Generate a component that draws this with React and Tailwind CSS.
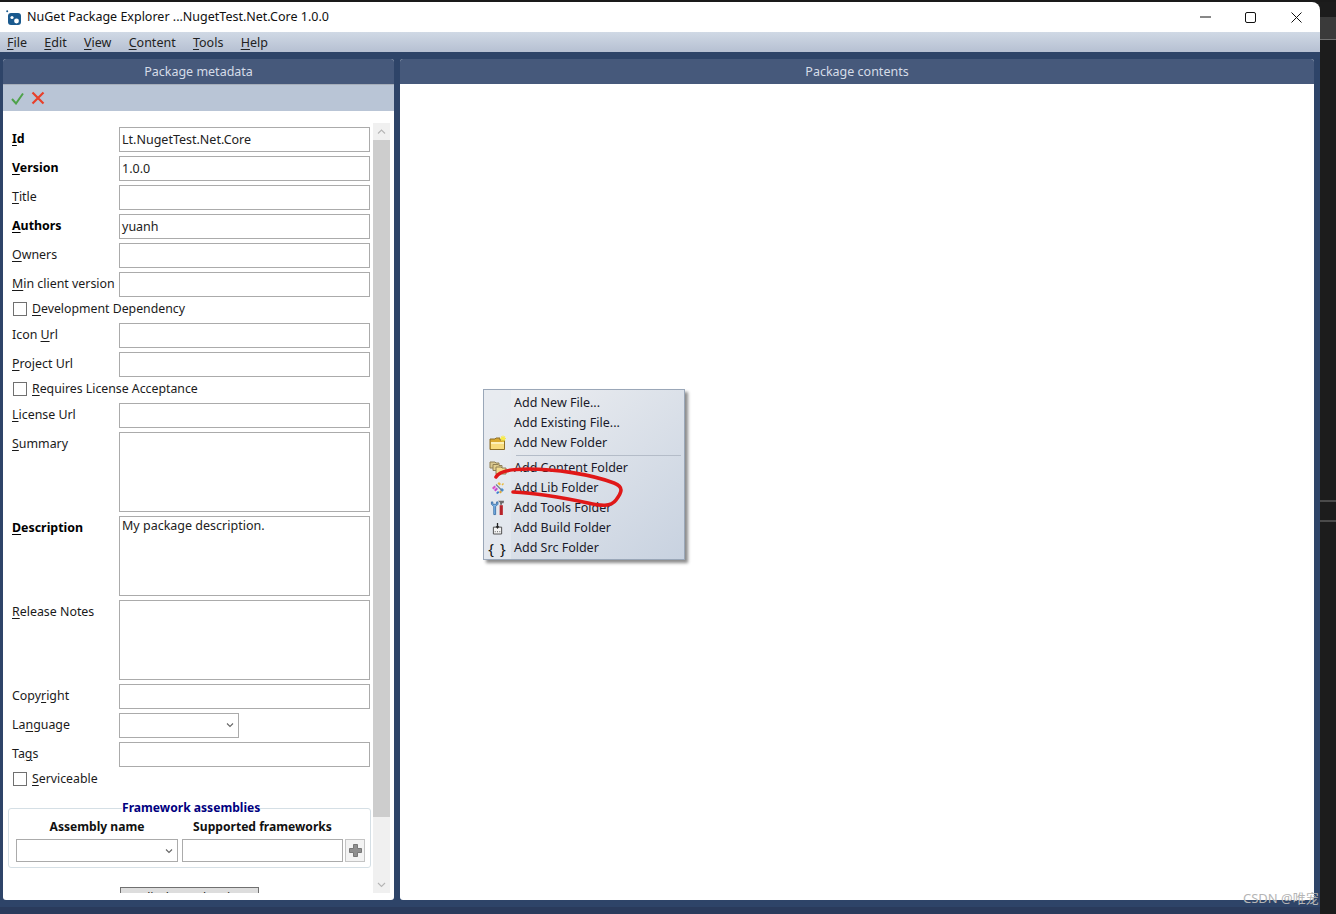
import React from "react";

const font = { fontFamily: '"Noto Sans", "Noto Sans CJK SC", sans-serif' };

function U({ text, i = 0 }) {
  return (
    <>
      {text.slice(0, i)}
      <span className="underline underline-offset-2 decoration-1">{text[i]}</span>
      {text.slice(i + 1)}
    </>
  );
}

function Row({ label, u = 0, bold, value = "", h = "h-[25px]", mb = "mb-[4px]", w = "w-[251px]", lead = "leading-[23px]", select }) {
  return (
    <div className={`flex ${mb}`}>
      <div className={`w-[107px] shrink-0 whitespace-nowrap text-[12.4px] leading-[24px] text-[#1a1a1a] ${bold ? "font-bold text-black" : ""}`}>
        <U text={label} i={u} />
      </div>
      <div className={`${h} ${w} ${lead} border border-[#ababab] bg-white px-[2px] text-[12.5px] text-[#222] relative`}>
        {value}
        {select && <Chevron />}
      </div>
    </div>
  );
}

function Chevron() {
  return (
    <svg className="absolute right-[4px] top-[8px]" width="8" height="6" viewBox="0 0 8 6">
      <path d="M1 1.5 L4 4.5 L7 1.5" fill="none" stroke="#666" strokeWidth="1.1" />
    </svg>
  );
}

function Check({ label, u = 0, mt = "mt-[2px]", mb = "mb-[6px]" }) {
  return (
    <div className={`flex items-center h-[18px] ${mt} ${mb}`}>
      <div className="w-[14px] h-[14px] border border-[#707070] bg-white ml-[1px] mr-[5px]" />
      <div className="text-[12.3px] leading-[18px] text-[#1a1a1a]">
        <U text={label} i={u} />
      </div>
    </div>
  );
}

function MenuItem({ label, icon }) {
  return (
    <div className="flex h-[20px] items-center">
      <div className="w-[27px] h-[20px] flex items-center justify-center shrink-0">{icon}</div>
      <div className="pl-[3px] text-[12.5px] leading-[20px] text-[#1a1a2a]">{label}</div>
    </div>
  );
}

const FolderNew = (
  <svg width="18" height="16" viewBox="0 0 18 16">
    <path d="M1 4 H6 L7 3 H11 V5 H15.5 V14.5 H1 Z" fill="#d9a92f" stroke="#8c6f2a" strokeWidth="1" />
    <path d="M2 7 H15 V14 H2 Z" fill="#f8dc7d" />
    <path d="M2 7 H15 V9 H2 Z" fill="#fdf0b8" />
    <path d="M14 0.5 V6.5 M11 3.5 H17 M12 1.5 L16 5.5 M16 1.5 L12 5.5" stroke="#f7ea4a" strokeWidth="1.1" />
  </svg>
);
const FolderStack = (
  <svg width="18" height="14" viewBox="0 0 18 14">
    <path d="M1 1 H6 L7 2 H10 V7 H1 Z" fill="#d9c890" stroke="#8f7f55" />
    <path d="M4 3.5 H9 L10 4.5 H13 V9.5 H4 Z" fill="#e2d090" stroke="#8f7f55" />
    <path d="M7 6 H12 L13 7 H17 V13 H7 Z" fill="#f1dc90" stroke="#8f7f55" />
  </svg>
);
const LibIcon = (
  <svg width="14" height="14" viewBox="0 0 14 14">
    <path d="M8 1 L10 3 L8.5 4.5 L6.5 2.5 Z" fill="#e8b93a" />
    <path d="M10.5 3.5 L12 2 L13 3 L11.5 4.5 Z" fill="#e8b93a" />
    <path d="M1 7 L3.5 4.5 L5 6 L2.5 8.5 Z" fill="#d94fc9" />
    <path d="M3 9 L5.5 6.5 L7 8 L4.5 10.5 Z" fill="#c24ad2" />
    <path d="M5 12 L7 10 L8.5 11.5 L6.5 13 Z" fill="#3f7fd0" />
    <path d="M9 9 L11 7 L13 9 L11 11 Z" fill="#3f8fd8" />
    <path d="M8 11 L9.5 9.5 L11 11 L9.5 12.5 Z" fill="#e0a83a" />
    <path d="M5 3.5 L11 9.5" stroke="#6f7f95" strokeWidth="1.2" />
  </svg>
);
const ToolsIcon = (
  <svg width="15" height="16" viewBox="0 0 16 17">
    <path d="M1.5 2 V4.5 L4 7 V15.5 H6 V7 L8.5 4.5 V2 L7 2 V4.5 H3 V2 Z" fill="#7db6ea" stroke="#2a5f9a" strokeWidth="0.8" />
    <path d="M8.5 0.8 H15 L14.5 3.5 H12.8 V5 H10.8 V3 Z" fill="#6b6b6b" />
    <path d="M10.3 5.5 H13.7 V16 H10.3 Z" fill="#b8232a" />
  </svg>
);
const BuildIcon = (
  <svg width="11" height="13" viewBox="0 0 12 14">
    <path d="M1.5 5.5 H10.5 V13 H1.5 Z" fill="#f4f4f4" stroke="#444" />
    <path d="M6 1 V6" stroke="#222" strokeWidth="1.4" />
    <path d="M4 4.5 L6 7.5 L8 4.5 Z" fill="#222" />
    <path d="M3 10.5 H4 M5.5 10.5 H6.5 M8 10.5 H9" stroke="#444" />
  </svg>
);

export default function App() {
  return (
    <div className="w-[1336px] h-[914px] bg-[#1c1c1c] overflow-hidden relative flex flex-col" style={font}>
      <div className="h-[2px] bg-[#1a1a1a] shrink-0" />
      <div className="flex flex-1 min-h-0">
        <div className="w-[1320px] shrink-0 flex flex-col rounded-tr-[8px] overflow-hidden">
          {/* Title bar */}
          <div className="h-[30px] bg-white flex items-center shrink-0">
            <svg className="ml-[6px] mr-[6px] mt-[1px]" width="15" height="15" viewBox="0 0 15 15">
              <rect x="2" y="3" width="13" height="12" rx="3" fill="#1a5a8e" />
              <circle cx="1.2" cy="1.2" r="1" fill="#1a5a8e" />
              <circle cx="6" cy="7.5" r="1.6" fill="#fff" />
              <circle cx="10.5" cy="11" r="2.4" fill="#fff" />
            </svg>
            <div className="text-[12.5px] leading-[18px] text-[#111]">NuGet Package Explorer ...NugetTest.Net.Core 1.0.0</div>
            <div className="ml-auto flex items-center">
              <svg width="11" height="2" viewBox="0 0 11 2" className="mr-[34px]"><path d="M0 1 H11" stroke="#111" /></svg>
              <svg width="11" height="11" viewBox="0 0 11 11" className="mr-[35px]"><rect x="0.5" y="0.5" width="10" height="10" rx="1.5" fill="none" stroke="#111" /></svg>
              <svg width="11" height="11" viewBox="0 0 11 11" className="mr-[18px]"><path d="M0.5 0.5 L10.5 10.5 M10.5 0.5 L0.5 10.5" stroke="#111" /></svg>
            </div>
          </div>
          {/* Menu */}
          <div className="h-[20px] shrink-0 flex items-center bg-gradient-to-b from-[#d0d9e5] to-[#b6c0d2] pl-[7px] gap-[17.3px] pt-[2px] text-[12.5px] text-[#222]">
            <span><U text="File" /></span>
            <span><U text="Edit" /></span>
            <span><U text="View" /></span>
            <span><U text="Content" /></span>
            <span><U text="Tools" /></span>
            <span><U text="Help" /></span>
          </div>
          {/* Body */}
          <div className="flex-1 min-h-0 bg-[#2e4468] pt-[7px] pl-[3px] pr-[6px] pb-[7px] flex gap-[6px]">
            {/* Left panel */}
            <div className="w-[391px] shrink-0 flex flex-col bg-white rounded-[3px] overflow-hidden">
              <div className="h-[25px] pt-[1px] shrink-0 bg-[#46597b] flex items-center justify-center text-[12.5px] text-[#d5dce8]">Package metadata</div>
              <div className="h-[27px] shrink-0 bg-[#b9c5d6] border-t border-[#a6aeba] flex items-center pl-[8px] gap-[7px]">
                <svg width="13" height="13" viewBox="0 0 13 13"><path d="M1 7 L5 11.5 L12 1.5" fill="none" stroke="#4ea24a" strokeWidth="2" /></svg>
                <svg width="14" height="14" viewBox="0 0 14 14"><path d="M1.5 1.5 L12.5 12.5 M12.5 1.5 L1.5 12.5" stroke="#e8402a" strokeWidth="2.2" /></svg>
              </div>
              <div className="flex-1 min-h-0 flex pt-[12px] pb-[7px]">
                {/* Form */}
                <div className="w-[370px] h-[770px] shrink-0 overflow-hidden pl-[9px] pt-[4px]">
                  <Row label="Id" bold value="Lt.NugetTest.Net.Core" />
                  <Row label="Version" bold value="1.0.0" />
                  <Row label="Title" />
                  <Row label="Authors" bold value="yuanh" />
                  <Row label="Owners" />
                  <Row label="Min client version" mb="mb-0" />
                  <Check label="Development Dependency" mt="mt-[3px]" mb="mb-[5px]" />
                  <Row label="Icon Url" u={5} />
                  <Row label="Project Url" mb="mb-0" />
                  <Check label="Requires License Acceptance" mt="mt-[3px]" mb="mb-[5px]" />
                  <Row label="License Url" />
                  <Row label="Summary" h="h-[80px]" mb="mb-[4px]" lead="leading-[17px]" />
                  <Row label="Description" bold u={0} value="My package description." h="h-[80px]" mb="mb-[4px]" lead="leading-[17px]" />
                  <Row label="Release Notes" h="h-[80px]" mb="mb-[4px]" lead="leading-[17px]" />
                  <Row label="Copyright" u={4} />
                  <Row label="Language" u={2} w="w-[120px]" select />
                  <Row label="Tags" u={2} mb="mb-0" />
                  <Check label="Serviceable" mt="mt-[3px]" mb="mb-0" />
                  {/* Group box */}
                  <div className="relative mt-[20px] h-[60px] w-[363px] -ml-[4px] border border-[#d5dfe5] rounded-[3px]">
                    <div className="absolute -top-[10px] left-[113px] bg-white text-[12.1px] leading-[18px] font-bold text-[#00007f] whitespace-nowrap">Framework assemblies</div>
                    <div className="flex pt-[9px] pl-[7px] text-[12.1px] leading-[18px] font-bold text-[#111]">
                      <div className="w-[162px] mr-[4px] text-center">Assembly name</div>
                      <div className="w-[161px] text-center">Supported frameworks</div>
                    </div>
                    <div className="flex pl-[7px] mt-[3px]">
                      <div className="relative w-[162px] h-[23px] border border-[#ababab] bg-white mr-[4px]"><Chevron /></div>
                      <div className="w-[161px] h-[23px] border border-[#ababab] bg-white mr-[2px]" />
                      <div className="w-[20px] h-[23px] border border-[#c4c4c4] bg-[#f3f3f3] flex items-center justify-center">
                        <svg width="13" height="13" viewBox="0 0 13 13"><path d="M4.5 0.5 H8.5 V4.5 H12.5 V8.5 H8.5 V12.5 H4.5 V8.5 H0.5 V4.5 H4.5 Z" fill="#8f8f8f" stroke="#777" /></svg>
                      </div>
                    </div>
                  </div>
                  <div className="ml-[108px] mt-[19px] w-[139px] h-[24px] border border-[#707070] bg-[#dddddd] text-center text-[12.5px] leading-[20px] text-[#222]">Edit dependencies</div>
                </div>
                {/* Scrollbar */}
                <div className="w-[17px] shrink-0 h-[770px] bg-[#f0f0f0] flex flex-col">
                  <div className="h-[17px] shrink-0 flex items-center justify-center">
                    <svg width="9" height="6" viewBox="0 0 9 6"><path d="M1 4.5 L4.5 1 L8 4.5" fill="none" stroke="#b5b5b5" strokeWidth="1.1" /></svg>
                  </div>
                  <div className="h-[677px] shrink-0 bg-[#cdcdcd]" />
                  <div className="flex-1" />
                  <div className="h-[17px] shrink-0 flex items-center justify-center">
                    <svg width="9" height="6" viewBox="0 0 9 6"><path d="M1 1 L4.5 4.5 L8 1" fill="none" stroke="#b5b5b5" strokeWidth="1.1" /></svg>
                  </div>
                </div>
              </div>
            </div>
            {/* Right panel */}
            <div className="flex-1 flex flex-col bg-white rounded-[3px] overflow-hidden">
              <div className="h-[25px] pt-[1px] shrink-0 bg-[#46597b] flex items-center justify-center text-[12.5px] text-[#d5dce8]">Package contents</div>
            </div>
          </div>
          <div className="h-[7px] shrink-0 bg-[#2a3b5c]" />
        </div>
        {/* Dark desktop at right */}
        <div className="flex-1 relative bg-[#1c1c1c]">
          <div className="absolute left-0 right-0 top-[15px] h-[23px] bg-[#3a3a3a] border-b border-[#707070]" />
          <div className="absolute left-0 right-0 top-[498px] h-[2px] bg-[#4a4a4a]" />
          <div className="absolute left-0 right-0 top-[518px] h-[2px] bg-[#4a4a4a]" />
        </div>
      </div>

      {/* Context menu */}
      <div className="absolute left-[483px] top-[389px] w-[202px] h-[171px] border border-[#9aa7b8] shadow-[3px_3px_3px_rgba(0,0,0,0.45)] bg-gradient-to-br from-[#eff0f2] to-[#c8d2e0] pt-[3px]">
        <div className="absolute left-0 top-0 bottom-0 w-[27px] bg-[#e6eaef]/70" />
        <div className="relative">
          <MenuItem label="Add New File..." />
          <MenuItem label="Add Existing File..." />
          <MenuItem label="Add New Folder" icon={FolderNew} />
          <div className="h-[5px] flex items-center pl-[32px] pr-[3px]"><div className="h-px w-full bg-[#b4bcc8]" /></div>
          <MenuItem label="Add Content Folder" icon={FolderStack} />
          <MenuItem label="Add Lib Folder" icon={LibIcon} />
          <MenuItem label="Add Tools Folder" icon={ToolsIcon} />
          <MenuItem label="Add Build Folder" icon={BuildIcon} />
          <MenuItem label="Add Src Folder" icon={<span className="text-[15px] leading-none text-[#111] tracking-[1px]">{"{ }"}</span>} />
        </div>
      </div>

      {/* Red annotation */}
      <svg className="absolute left-[490px] top-[460px] pointer-events-none" width="140" height="55" viewBox="0 0 140 55">
        <path
          d="M6 17 C9 11 20 9 38 9 C65 9 100 14 124 23 C134 27 132 32 126 40 C121 47 111 46 98 43 C75 38 45 33 23 32"
          fill="none"
          stroke="#e01818"
          strokeWidth="3.6"
          strokeLinecap="round"
        />
      </svg>

      {/* Watermark */}
      <div className="absolute left-[1243px] top-[890px] text-[13px] leading-[16px] text-[#b5b5b5] whitespace-nowrap">CSDN @唯宠</div>
    </div>
  );
}
